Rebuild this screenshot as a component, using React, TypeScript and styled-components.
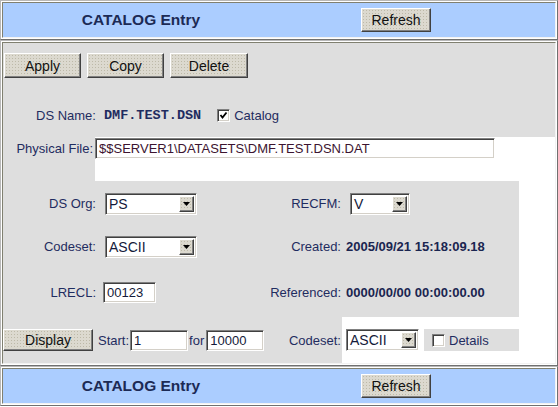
import React from "react";
import styled, { createGlobalStyle } from "styled-components";

const GlobalStyle = createGlobalStyle`
  body {
    margin: 0;
    background: #ffffff;
    font-family: "Liberation Sans", Arial, sans-serif;
  }
`;

const Page = styled.div`
  width: 558px;
`;

const Frame = styled.div`
  border: 1px solid;
  border-color: #b8b8b8 #707070 #707070 #b8b8b8;
  padding: 1px;
  background: #ffffff;
`;

const HeaderCell = styled.div`
  height: 34px;
  border: 1px solid;
  border-color: #808070 #f2f2f2 #f2f2f2 #808070;
  background: #abcdff;
  display: grid;
  grid-template-columns: 276px 1fr;
  align-items: center;
`;

const Title = styled.div`
  text-align: center;
  font-size: 15.5px;
  font-weight: bold;
  color: #1c2a55;
`;

const Button = styled.button<{ $w: number; $h?: number }>`
  width: ${(p) => p.$w}px;
  height: ${(p) => p.$h ?? 25}px;
  box-sizing: border-box;
  padding: 0;
  border: 1px solid;
  border-color: #ffffff #404040 #404040 #ffffff;
  box-shadow: inset -1px -1px #808080;
  background-color: #dcd9cf;
  background-image: radial-gradient(circle, #bdb9a8 0.6px, transparent 0.75px);
  background-size: 3px 3px;
  font-family: "Liberation Sans", Arial, sans-serif;
  font-size: 14px;
  color: #111111;
`;

const RefreshButton = styled(Button)`
  margin-left: 82px;
`;

const MainCell = styled.div`
  border: 1px solid;
  border-color: #808070 #f2f2f2 #f2f2f2 #808070;
  background: #ffffff;
  display: flex;
  flex-direction: column;
`;

const TopSection = styled.div`
  height: 94px;
  background: #dedede;
  padding-top: 10px;
  box-sizing: border-box;
`;

const ButtonRow = styled.div`
  display: flex;
  gap: 6px;
  padding-left: 1px;
`;

const NameRow = styled.div`
  display: flex;
  align-items: center;
  height: 26px;
  margin-top: 24px;
  padding-left: 33px;
`;

const Label = styled.span`
  font-size: 13px;
  color: #1f2c60;
  white-space: nowrap;
`;

const DsName = styled.span`
  margin-left: 8px;
  font-family: "Liberation Mono", "Courier New", monospace;
  font-size: 13.5px;
  font-weight: bold;
  color: #1f2c60;
`;

const CheckBox = styled.span<{ $ml: number }>`
  width: 13px;
  height: 13px;
  box-sizing: border-box;
  margin-left: ${(p) => p.$ml}px;
  border: 1px solid;
  border-color: #808080 #ffffff #ffffff #808080;
  box-shadow: inset 1px 1px #404040, inset -1px -1px #d4d0c8;
  background: #ffffff;
  display: inline-flex;
  align-items: center;
  justify-content: center;
  flex-shrink: 0;
`;

const CheckText = styled(Label)`
  margin-left: 4px;
`;

const FileRow = styled.div`
  height: 44px;
  display: grid;
  grid-template-columns: 92px 1fr;
`;

const FileLabelCell = styled.div`
  background: #dedede;
  text-align: right;
  padding: 2px 2px 0 0;
`;

const TextInput = styled.div<{ $w: number; $color?: string }>`
  width: ${(p) => p.$w}px;
  height: 21px;
  box-sizing: border-box;
  border: 1px solid;
  border-color: #808080 #ffffff #ffffff #808080;
  box-shadow: inset 1px 1px #404040, inset -1px -1px #d4d0c8;
  background: #ffffff;
  padding: 0 0 0 3px;
  display: flex;
  align-items: center;
  font-size: 13px;
  color: ${(p) => p.$color ?? "#141a3a"};
  white-space: nowrap;
  overflow: hidden;
`;

const FileInput = styled(TextInput)`
  margin-top: 1px;
`;

const AttrRow = styled.div`
  height: 136px;
  display: grid;
  grid-template-columns: 516px 1fr;
`;

const AttrGrid = styled.div`
  background: #dedede;
  padding-top: 1px;
  display: grid;
  grid-template-columns: 93px 173px 72px 1fr;
  grid-template-rows: 43px 43px 49px;
  align-items: center;
`;

const RightLabel = styled(Label)`
  text-align: right;
`;

const Control = styled.div<{ $ml: number }>`
  margin-left: ${(p) => p.$ml}px;
  display: flex;
`;

const Value = styled.span<{ $ml: number }>`
  margin-left: ${(p) => p.$ml}px;
  font-size: 13px;
  font-weight: bold;
  color: #1a2550;
  white-space: nowrap;
`;

const SelectBox = styled.div<{ $w: number }>`
  width: ${(p) => p.$w}px;
  height: 22px;
  box-sizing: border-box;
  border: 1px solid;
  border-color: #808080 #ffffff #ffffff #808080;
  box-shadow: inset 1px 1px #404040, inset -1px -1px #d4d0c8;
  background: #ffffff;
  display: flex;
  align-items: stretch;
  padding: 2px;
`;

const SelectText = styled.span`
  flex: 1;
  font-size: 14px;
  line-height: 16px;
  color: #141a3a;
  padding-left: 1px;
`;

const SelectArrow = styled.span`
  width: 15px;
  box-sizing: border-box;
  border: 1px solid;
  border-color: #ffffff #404040 #404040 #ffffff;
  box-shadow: inset -1px -1px #808080;
  background-color: #dcd9cf;
  background-image: radial-gradient(circle, #bdb9a8 0.6px, transparent 0.75px);
  background-size: 3px 3px;
  display: flex;
  align-items: center;
  justify-content: center;
`;

const BottomRow = styled.div`
  height: 46px;
  display: grid;
  grid-template-columns: 339px 1fr;
`;

const DisplayGroup = styled.div`
  background: #dedede;
  display: flex;
  align-items: center;
`;

const InlineLabel = styled(Label)<{ $ml: number }>`
  margin-left: ${(p) => p.$ml}px;
`;

const InlineInput = styled(TextInput)<{ $ml: number }>`
  margin-left: ${(p) => p.$ml}px;
`;

const CodesetLabel = styled(Label)`
  margin-left: auto;
  padding-right: 1px;
`;

const OptionGroup = styled.div`
  display: flex;
  align-items: center;
  padding-left: 4px;
`;

const DetailsBox = styled.div`
  width: 95px;
  height: 22px;
  margin-left: 5px;
  background: #dedede;
  display: flex;
  align-items: center;
`;

const Header: React.FC = () => (
  <Frame>
    <HeaderCell>
      <Title>CATALOG Entry</Title>
      <div>
        <RefreshButton $w={70} $h={24}>Refresh</RefreshButton>
      </div>
    </HeaderCell>
  </Frame>
);

const Select: React.FC<{ value: string; width: number }> = ({ value, width }) => (
  <SelectBox $w={width}>
    <SelectText>{value}</SelectText>
    <SelectArrow>
      <svg width="7" height="4" viewBox="0 0 7 4">
        <polygon points="0,0 7,0 3.5,4" fill="#000" />
      </svg>
    </SelectArrow>
  </SelectBox>
);

const Check: React.FC<{ checked?: boolean; ml: number }> = ({ checked, ml }) => (
  <CheckBox $ml={ml}>
    {checked && (
      <svg width="9" height="9" viewBox="0 0 9 9">
        <polyline points="1.5,4 3.5,6.5 7.5,1.5" fill="none" stroke="#000" strokeWidth="1.8" />
      </svg>
    )}
  </CheckBox>
);

const App: React.FC = () => (
  <Page>
    <GlobalStyle />
    <Header />
    <Frame>
      <MainCell>
        <TopSection>
          <ButtonRow>
            <Button $w={77}>Apply</Button>
            <Button $w={77}>Copy</Button>
            <Button $w={78}>Delete</Button>
          </ButtonRow>
          <NameRow>
            <Label>DS Name:</Label>
            <DsName>DMF.TEST.DSN</DsName>
            <Check checked ml={16} />
            <CheckText>Catalog</CheckText>
          </NameRow>
        </TopSection>
        <FileRow>
          <FileLabelCell>
            <Label>Physical File:</Label>
          </FileLabelCell>
          <div>
            <FileInput $w={400} $color="#3c1430">$$SERVER1\DATASETS\DMF.TEST.DSN.DAT</FileInput>
          </div>
        </FileRow>
        <AttrRow>
          <AttrGrid>
            <RightLabel>DS Org:</RightLabel>
            <Control $ml={9}>
              <Select value="PS" width={92} />
            </Control>
            <RightLabel>RECFM:</RightLabel>
            <Control $ml={9}>
              <Select value="V" width={60} />
            </Control>

            <RightLabel>Codeset:</RightLabel>
            <Control $ml={9}>
              <Select value="ASCII" width={92} />
            </Control>
            <RightLabel>Created:</RightLabel>
            <Value $ml={5}>2005/09/21 15:18:09.18</Value>

            <RightLabel>LRECL:</RightLabel>
            <Control $ml={7}>
              <TextInput $w={53}>00123</TextInput>
            </Control>
            <RightLabel>Referenced:</RightLabel>
            <Value $ml={5}>0000/00/00 00:00:00.00</Value>
          </AttrGrid>
          <div />
        </AttrRow>
        <BottomRow>
          <DisplayGroup>
            <Button $w={90} $h={22}>Display</Button>
            <InlineLabel $ml={5}>Start:</InlineLabel>
            <InlineInput $w={58} $ml={1}>1</InlineInput>
            <InlineLabel $ml={1}>for</InlineLabel>
            <InlineInput $w={58} $ml={2}>10000</InlineInput>
            <CodesetLabel>Codeset:</CodesetLabel>
          </DisplayGroup>
          <OptionGroup>
            <Select value="ASCII" width={73} />
            <DetailsBox>
              <Check ml={8} />
              <CheckText>Details</CheckText>
            </DetailsBox>
          </OptionGroup>
        </BottomRow>
      </MainCell>
    </Frame>
    <Header />
  </Page>
);

export default App;
